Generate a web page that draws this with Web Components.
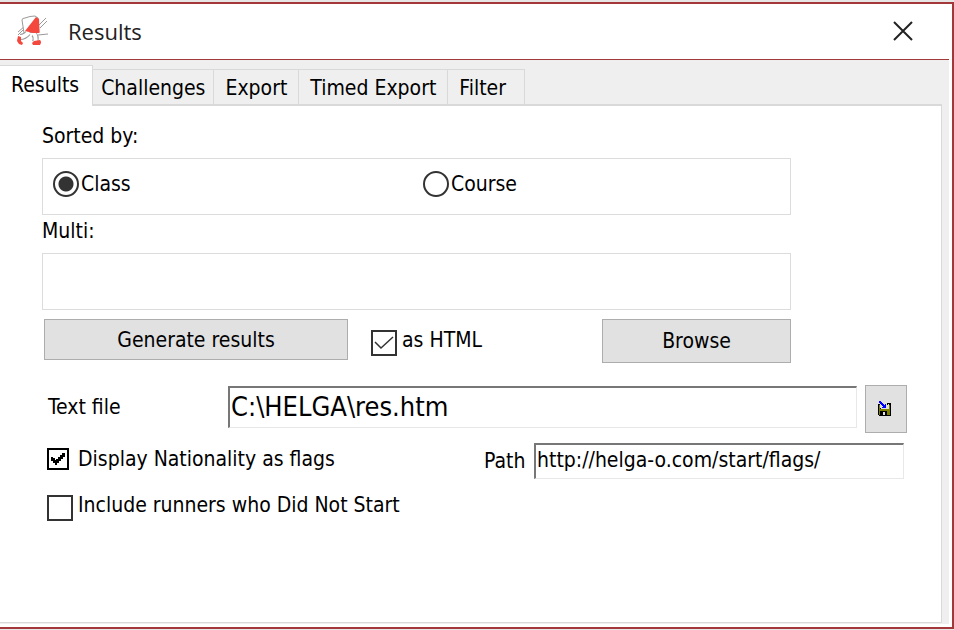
<!DOCTYPE html>
<html lang="en">
<head>
<meta charset="utf-8">
<title>Results</title>
<style>
  body {
    margin: 0;
    background: #e6e6e6;
    color: #000;
    font: 21px/24px "DejaVu Sans Condensed", "DejaVu Sans", sans-serif;
    font-stretch: condensed;
  }
  .row { display: flex; align-items: flex-start; }
  .heading { margin: 0; font-size: 21px; font-weight: normal; }
  .sorted { padding: 18px 150px 0 42px; }
  .actions { padding: 9px 150px 0 44px; }
  .actions push-button:first-child { flex: 304 1 0; }
  .actions check-box { flex: 231 1 0; margin: 9px 0 0 23px; }
  .actions push-button:last-child { flex: 189 1 0; --height: 44px; }
  .file { padding: 23px 34px 0 48px; }
  .file text-field { flex: 1; --label: 180px; --size: 27px; --height: 42px; }
  .file icon-button { margin-left: 8px; }
  .flags { padding: 10px 37px 0 47px; }
  .flags check-box { flex: 437 1 0; margin-top: 4px; }
  .flags text-field { flex: 420 1 0; --label: 50px; --size: 21px; --height: 36px; }
  .start { padding: 14px 34px 0 47px; }
</style>
</head>
<body>
<app-window heading="Results">
  <tab-bar slot="tabs" tabs="Results,Challenges,Export,Timed Export,Filter"></tab-bar>
  <div class="sorted">
    <h2 class="heading">Sorted by:</h2>
    <radio-group name="sort" label="Sorted by" options="Class,Course"></radio-group>
    <h2 class="heading">Multi:</h2>
    <group-box></group-box>
  </div>
  <div class="row actions">
    <push-button>Generate results</push-button>
    <check-box checked>as HTML</check-box>
    <push-button>Browse</push-button>
  </div>
  <div class="row file">
    <text-field label="Text file" value="C:\HELGA\res.htm"></text-field>
    <icon-button></icon-button>
  </div>
  <div class="row flags">
    <check-box classic checked>Display Nationality as flags</check-box>
    <text-field label="Path" value="http://helga-o.com/start/flags/"></text-field>
  </div>
  <div class="row start">
    <check-box>Include runners who Did Not Start</check-box>
  </div>
</app-window>

<script>
class BaseElement extends HTMLElement {
  connectedCallback() {
    if (this.shadowRoot) return;
    this.attachShadow({ mode: "open" }).innerHTML = this.render();
  }
}

class AppWindow extends BaseElement {
  render() {
    return `
      <style>
        :host {
          display: flex;
          flex-direction: column;
          box-sizing: border-box;
          min-height: calc(100vh - 3px);
          margin: 2px 0 1px;
          padding: 0 3px 3px 0;
          border: solid #a4373a;
          border-width: 2px 2px 2px 0;
          background: #fff;
        }
        header {
          display: flex;
          align-items: center;
          height: 53px;
          padding: 0 32px 2px 14px;
          border-bottom: 1px solid #a4373a;
        }
        h1 {
          flex: 1;
          margin: 0 0 0 18px;
          color: #222;
          font: 22px/30px "Open Sans", "Noto Sans", sans-serif;
        }
        button { width: 28px; height: 28px; padding: 0; border: 0; background: none; }
        svg { display: block; }
        .client {
          display: flex;
          flex-direction: column;
          flex: 1;
          padding: 5px 7px 1px 0;
          background: #efefef;
        }
        main {
          flex: 1;
          border: solid #d9d9d9;
          border-width: 0 1px 1px 0;
          background: #fff;
        }
      </style>
      <header>
        <svg width="36" height="34" viewBox="14 14 36 34" fill="none" stroke="#999" aria-hidden="true">
          <path d="M39 25 L46 18 M40 28 L47 21 M38 35 L48 34 M18 32 L25 26 M18 35 L24 29"/>
          <path fill="#fff" d="M22 20 Q22 18 25 18 Q30 16 35 16 L38 18 L39 32 L24 33 Z"/>
          <path stroke-width="6" d="M28 33 Q25 37 20 37 M33 34 Q37 36 35 42"/>
          <path stroke="#fff" stroke-width="4" d="M29 32 Q25 37 20 37 M33 33 Q37 36 35 43"/>
          <path fill="#f4483e" stroke="none" d="M36 17 L39 19 L39.500 33 L33 33 L25 31 Z"/>
          <path fill="#f4483e" stroke="none" d="M18 36 L21 37 L21 41 L23 43 L22 45 L19 44 L17 41 Z M34 41 L40 40 Q42 42 40 45 L33 45 L32 43 Z"/>
        </svg>
        <h1>${this.getAttribute("heading")}</h1>
        <button aria-label="Close">
          <svg width="28" height="28" viewBox="0 0 28 28" stroke="#222" stroke-width="2">
            <path d="M5 5 L23 23 M23 5 L5 23"/>
          </svg>
        </button>
      </header>
      <div class="client">
        <slot name="tabs"></slot>
        <main><slot></slot></main>
      </div>`;
  }
}

class TabBar extends BaseElement {
  render() {
    const tabs = this.getAttribute("tabs").split(",");
    return `
      <style>
        :host { display: block; }
        div { display: flex; align-items: flex-end; height: 41px; box-shadow: inset 0 -2px #d9d9d9; }
        button {
          height: 37px;
          margin: 0;
          padding: 2px 11px 0;
          border: solid #d9d9d9;
          border-width: 1px 1px 2px 0;
          background: #efefef;
          color: inherit;
          font: inherit;
          white-space: nowrap;
        }
        button:nth-child(2) { padding: 2px 8px 0; }
        button:last-child { padding-right: 18px; }
        button[aria-selected="true"] {
          height: 41px;
          padding: 0 13px 3px 11px;
          border-bottom: 0;
          background: #fff;
        }
      </style>
      <div role="tablist">
        ${tabs.map((tab, i) => `<button role="tab" aria-selected="${i === 0}">${tab}</button>`).join("")}
      </div>`;
  }
}

class GroupBox extends BaseElement {
  render() {
    return `
      <style>
        :host {
          display: block;
          box-sizing: border-box;
          height: 57px;
          margin-top: 10px;
          border: 1px solid #dcdcdc;
        }
      </style>
      <slot></slot>`;
  }
}

class RadioGroup extends BaseElement {
  render() {
    const name = this.getAttribute("name");
    const options = this.getAttribute("options").split(",");
    return `
      <style>
        :host { display: block; margin: 0 0 4px; }
        .options {
          display: grid;
          grid-template-columns: 1fr 1fr;
          gap: 3px;
          padding: 12px 0 0 10px;
        }
        label { display: flex; align-items: center; gap: 2px; }
        input {
          appearance: none;
          width: 26px;
          height: 26px;
          margin: 0;
          border: 2px solid #333;
          border-radius: 50%;
          background: #fff;
        }
        input:checked { background: radial-gradient(circle, #333 7px, #fff 8px); }
      </style>
      <group-box>
        <div class="options" role="radiogroup" aria-label="${this.getAttribute("label")}">
          ${options.map((text, i) => `
            <label><input type="radio" name="${name}" ${i === 0 ? "checked" : ""}>${text}</label>
          `).join("")}
        </div>
      </group-box>`;
  }
}

class PushButton extends BaseElement {
  render() {
    return `
      <style>
        :host { display: block; }
        button {
          width: 100%;
          height: var(--height, 41px);
          padding: 0;
          border: 1px solid #adadad;
          background: #e1e1e1;
          color: inherit;
          font: inherit;
        }
      </style>
      <button><slot></slot></button>`;
  }
}

class CheckBox extends BaseElement {
  render() {
    const checked = this.hasAttribute("checked") ? "checked" : "";
    return `
      <style>
        :host { display: block; }
        label { display: flex; align-items: flex-start; gap: 5px; white-space: nowrap; }
        .box { display: grid; margin-top: 2px; }
        .box > * { grid-area: 1 / 1; }
        input {
          appearance: none;
          width: 26px;
          height: 26px;
          margin: 0;
          border: 2px solid #333;
          background: #fff;
        }
        svg { display: none; pointer-events: none; }
        input:checked + svg { display: block; }
        .check { fill: none; stroke: #333; stroke-width: 1.5; }
        :host([classic]) label { gap: 9px; }
        :host([classic]) .box { margin-top: 1px; }
        :host([classic]) input { width: 22px; height: 22px; border-color: #000; }
        :host([classic]) .check { fill: #000; stroke: none; }
      </style>
      <label>
        <span class="box">
          <input type="checkbox" ${checked}>
          ${this.hasAttribute("classic")
            ? `<svg width="22" height="22"><path class="check" d="M4 9h2v1h2v2h1v-1h2v-2h2v-2h2v-2h3v4h-2v2h-2v2h-2v2h-2v2h-2v-2h-2v-2h-2z"/></svg>`
            : `<svg width="26" height="26"><path class="check" d="M4 12 L10 18 L22 7"/></svg>`}
        </span>
        <slot></slot>
      </label>`;
  }
}

class TextField extends BaseElement {
  render() {
    return `
      <style>
        :host { display: block; }
        div { display: flex; align-items: center; }
        label { flex: none; width: var(--label); white-space: nowrap; }
        input {
          box-sizing: border-box;
          flex: 1;
          min-width: 0;
          height: var(--height);
          padding: 0 1px 3px;
          border: solid;
          border-width: 2px 1px 1px 2px;
          border-color: #777 #e8e8e8 #e8e8e8 #777;
          border-radius: 0;
          background: #fff;
          color: inherit;
          font: inherit;
          font-size: var(--size);
        }
      </style>
      <div>
        <label for="field">${this.getAttribute("label")}</label>
        <input id="field" type="text" value="${this.getAttribute("value")}">
      </div>`;
  }
}

class IconButton extends BaseElement {
  render() {
    return `
      <style>
        :host { display: block; margin-top: -1px; }
        button {
          display: grid;
          place-items: center;
          width: 42px;
          height: 48px;
          padding: 0 3px 2px 0;
          border: 1px solid #adadad;
          background: #e1e1e1;
        }
      </style>
      <button aria-label="Save to file">
        <svg width="13" height="15" viewBox="0 0 13 15" shape-rendering="crispEdges">
          <path fill="#000" d="M0 3h2v11h-2z M11 2h2v13h-2z M1 7h11v8h-11z"/>
          <path fill="#808000" d="M1 4h1v10h-1z M2 8h9v2h-9z M11 4h1v10h-1z M9 10h2v4h-2z"/>
          <path fill="#e1e1e1" d="M3 4h8v4h-8z M5 11h2v3h-2z"/>
          <path fill="#000" d="M9 2h2v1h-2z M9 3h1v1h-1z"/>
          <path fill="#00f" d="M1 0h2v1h1v1h1v1h1v1h1v-1h1v4h-4v-1h1v-1h-1v-1h-1v-1h-1v-1h-1z"/>
        </svg>
      </button>`;
  }
}

customElements.define("group-box", GroupBox);
customElements.define("radio-group", RadioGroup);
customElements.define("tab-bar", TabBar);
customElements.define("push-button", PushButton);
customElements.define("check-box", CheckBox);
customElements.define("text-field", TextField);
customElements.define("icon-button", IconButton);
customElements.define("app-window", AppWindow);
</script>
</body>
</html>
